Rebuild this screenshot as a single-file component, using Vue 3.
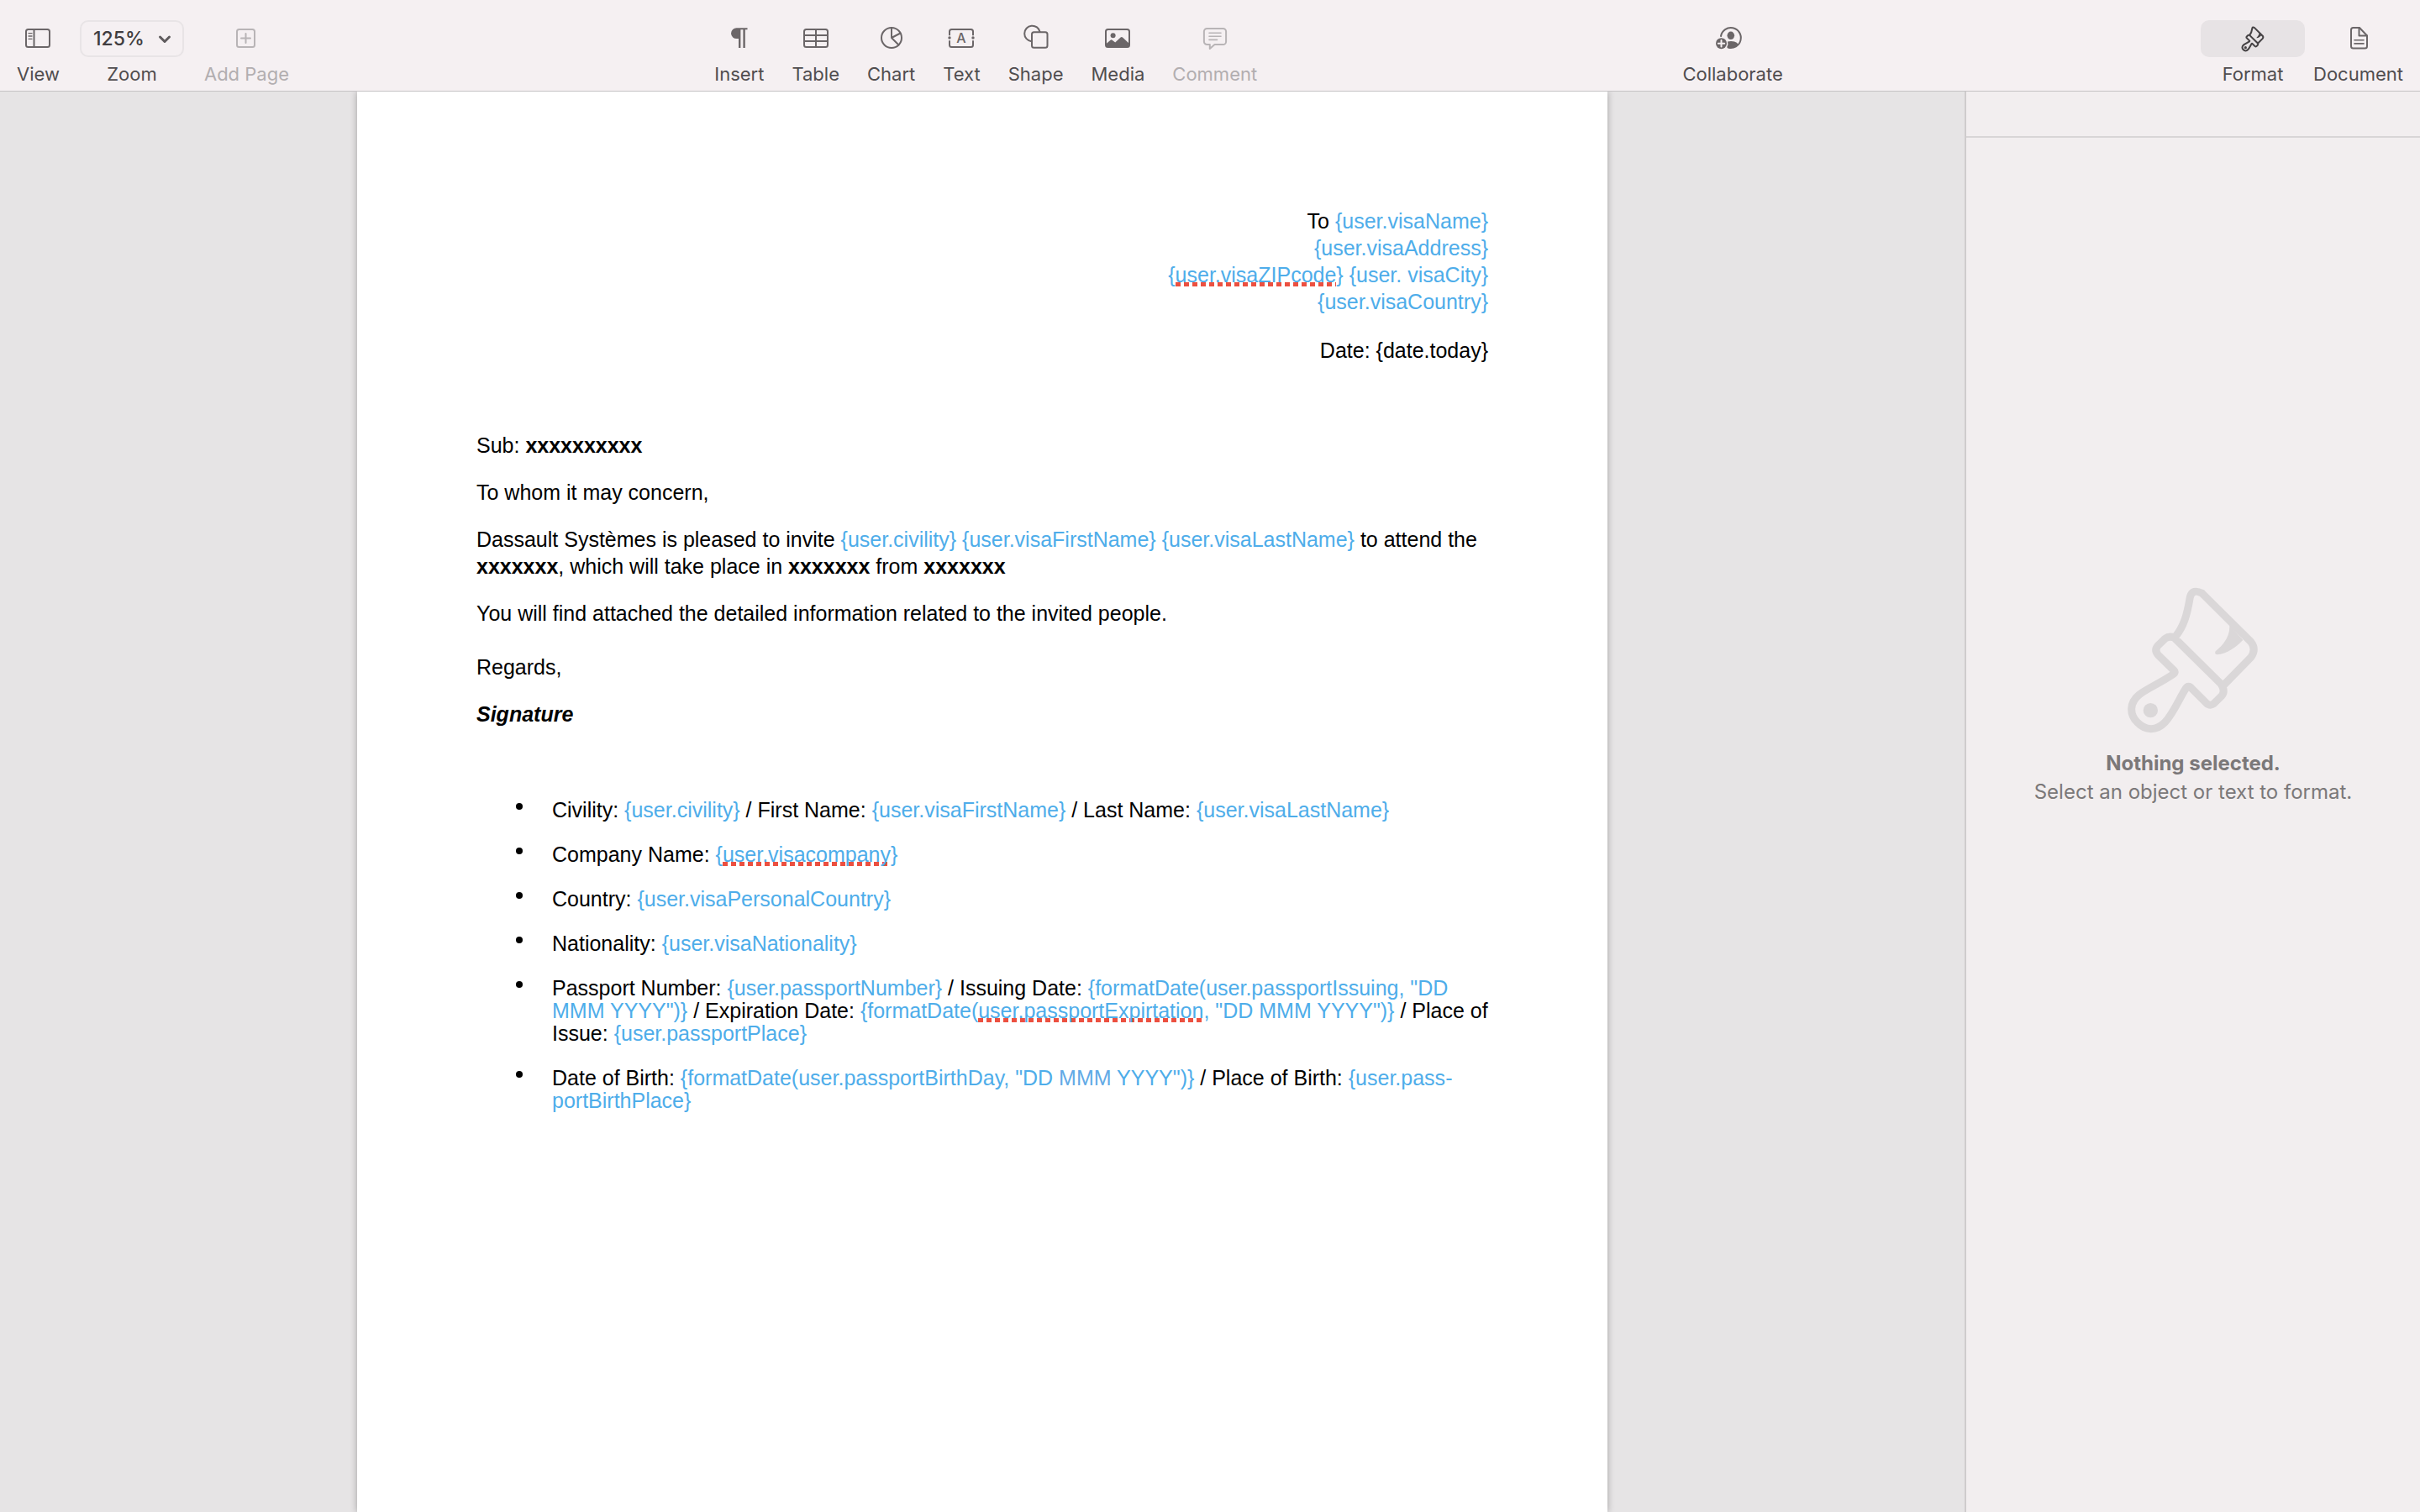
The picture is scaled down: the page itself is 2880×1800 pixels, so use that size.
<script setup>
import { ref } from 'vue';

// data
const zoom = ref('125%');
const zoomLevels = ['75%', '100%', '125%', '150%', '200%'];
const activePanel = ref('format');
</script>

<template>
  <div class="app">
    <header class="toolbar">
      <div class="group group-left">
        <button class="tool" type="button">
          <svg class="icon" viewBox="0 0 44 44">
            <rect x="8" y="11" width="28" height="21" rx="2.5" />
            <path d="M17.5 11v21" />
            <path d="M11 15.7h4M11 19h4M11 22.3h4" stroke-width="1.3" />
          </svg>
          <span>View</span>
        </button>
        <div class="tool">
          <div class="select-box">
            <select id="zoom" v-model="zoom">
              <option v-for="level in zoomLevels" :key="level">{{ level }}</option>
            </select>
            <svg class="chevron" viewBox="0 0 16 12">
              <path d="M2.5 3 8 8.5 13.5 3" />
            </svg>
          </div>
          <label for="zoom">Zoom</label>
        </div>
        <button class="tool" type="button" disabled>
          <svg class="icon" viewBox="0 0 44 44">
            <rect x="11" y="11" width="21" height="21" rx="2.5" />
            <path d="M21.5 16v11M16 21.5h11" />
          </svg>
          <span>Add Page</span>
        </button>
      </div>

      <div class="group group-insert">
        <button class="tool" type="button">
          <svg class="icon" viewBox="0 0 44 44">
            <path
              class="solid"
              d="M31.5 9.3H19a6.6 6.6 0 0 0-7 6.4 6.6 6.6 0 0 0 7 6.4h2V33h2.4V11.3h3V33h2.4V11.3h2.7z"
            />
          </svg>
          <span>Insert</span>
        </button>
        <button class="tool" type="button">
          <svg class="icon" viewBox="0 0 44 44">
            <rect x="8" y="11" width="28" height="21" rx="2.5" />
            <path d="M22 11v21M8 18h28M8 25h28" />
          </svg>
          <span>Table</span>
        </button>
        <button class="tool" type="button">
          <svg class="icon" viewBox="0 0 44 44">
            <circle cx="22" cy="21" r="12" />
            <path d="M22 9v12l10.5-5.5M22 21l8.5 8.5" />
          </svg>
          <span>Chart</span>
        </button>
        <button class="tool" type="button">
          <svg class="icon" viewBox="0 0 44 44">
            <path d="M8 17.5v-4A2.5 2.5 0 0 1 10.5 11h23a2.5 2.5 0 0 1 2.5 2.5v4" />
            <path d="M8 25v4.5a2.5 2.5 0 0 0 2.5 2.5h23a2.5 2.5 0 0 0 2.5-2.5V25" />
            <circle class="solid" cx="8" cy="21" r="1.7" />
            <circle class="solid" cx="36" cy="21" r="1.7" />
            <text class="glyph" x="22" y="27" text-anchor="middle">A</text>
          </svg>
          <span>Text</span>
        </button>
        <button class="tool" type="button">
          <svg class="icon" viewBox="0 0 44 44">
            <path d="M16.5 25.2A9.3 9.3 0 1 1 26.6 14" />
            <rect x="17" y="14.2" width="18.5" height="18.5" rx="2.5" />
          </svg>
          <span>Shape</span>
        </button>
        <button class="tool" type="button">
          <svg class="icon" viewBox="0 0 44 44">
            <rect x="8" y="11" width="28" height="21" rx="2.5" />
            <circle class="solid" cx="16.6" cy="18.3" r="3" />
            <path
              class="solid"
              d="M8 28.5l5.6-4.8q1-.7 2 0l3.6 2.8 6.4-6q1.2-1 2.4 0l8 7.5v2q0 2-2.5 2h-23q-2.5 0-2.5-2z"
            />
          </svg>
          <span>Media</span>
        </button>
        <button class="tool" type="button" disabled>
          <svg class="icon" viewBox="0 0 44 44">
            <path
              d="M12.5 10h19a3.6 3.6 0 0 1 3.6 3.6v11.8a3.6 3.6 0 0 1-3.6 3.6H21.5l-5.7 5V29h-3.3a3.6 3.6 0 0 1-3.6-3.6V13.6a3.6 3.6 0 0 1 3.6-3.6z"
            />
            <path d="M15 15.2h14M15 19.3h14M15 23.4h9.5" stroke-width="1.6" />
          </svg>
          <span>Comment</span>
        </button>
      </div>

      <div class="group">
        <button class="tool" type="button">
          <svg class="icon" viewBox="0 0 44 44">
            <path d="M8 19a12 12 0 1 1 8.6 13.6" />
            <ellipse class="solid" cx="19.8" cy="18.3" rx="4.3" ry="4.8" />
            <path class="solid" d="M16 25.6q4-1.2 8 0 3.4 1 4.6 3.2-4.4 4.7-9.4 4.2-3 0-4-.7 2-3.200.8-6.700z" />
            <circle class="solid" cx="8.5" cy="27.7" r="6.5" />
            <path class="badge-plus" d="M8.5 24v7.4M4.8 27.7h7.4" />
          </svg>
          <span>Collaborate</span>
        </button>
      </div>

      <div class="group group-right">
        <button
          class="tool"
          :class="{ active: activePanel === 'format' }"
          type="button"
          @click="activePanel = 'format'"
        >
          <span class="pill">
            <svg class="icon-brush" viewBox="445 75 490 545">
              <path
                d="M626 264C655 228 668 190 679 121Q688 90 722 108L896 281Q917 308 896 337L798 437M790 432L622 266Q604 259 590 270L565 294Q550 311 565 328L621 383Q629 390 619 397C570 430 530 446 500 468C462 497 462 540 490 568C520 600 560 600 590 568C620 535 640 485 663 449Q673 433 685 448L736 499Q752 514 767 499L792 474Q806 458 790 432Z"
              />
              <path
                class="solid"
                d="M820 222C822 262 798 292 770 315Q765 325 776 327C810 325 845 300 868 274Z"
              />
              <circle class="solid" cx="538" cy="526" r="28" />
            </svg>
          </span>
          <span>Format</span>
        </button>
        <button
          class="tool"
          :class="{ active: activePanel === 'document' }"
          type="button"
          @click="activePanel = 'document'"
        >
          <svg class="icon" viewBox="0 0 44 44">
            <path d="M16.5 9H24l9 9.5V31q0 2.5-2.5 2.5h-14Q14 33.500 14 31V11.5Q14 9 16.500 9z" />
            <path d="M23.5 9v9.5H33" />
            <path d="M18 23.7h11M18 27.9h11" stroke-width="1.6" />
          </svg>
          <span>Document</span>
        </button>
      </div>
    </header>

    <div class="workspace">
      <main class="canvas">
        <article class="page">
          <address class="recipient">
            To <span class="field">{user.visaName}</span><br />
            <span class="field">{user.visaAddress}</span><br />
            <span class="field">{<span class="typo">user.visaZIPcode</span>} {user. visaCity}</span><br />
            <span class="field">{user.visaCountry}</span>
          </address>
          <p class="date">Date: {date.today}</p>

          <p class="subject">Sub: <strong>xxxxxxxxxx</strong></p>
          <p>To whom it may concern,</p>
          <p>
            Dassault Systèmes is pleased to invite
            <span class="field">{user.civility} {user.visaFirstName} {user.visaLastName}</span>
            to attend the <strong>xxxxxxx</strong>, which will take place in <strong>xxxxxxx</strong> from
            <strong>xxxxxxx</strong>
          </p>
          <p>You will find attached the detailed information related to the invited people.</p>
          <p class="regards">Regards,</p>
          <p class="signature">Signature</p>

          <ul class="details">
            <li>
              Civility: <span class="field">{user.civility}</span> / First Name:
              <span class="field">{user.visaFirstName}</span> / Last Name:
              <span class="field">{user.visaLastName}</span>
            </li>
            <li>
              Company Name: <span class="field">{<span class="typo">user.visacompany</span>}</span>
            </li>
            <li>Country: <span class="field">{user.visaPersonalCountry}</span></li>
            <li>Nationality: <span class="field">{user.visaNationality}</span></li>
            <li>
              Passport Number: <span class="field">{user.passportNumber}</span> / Issuing Date:
              <span class="field">{formatDate(user.passportIssuing, "DD MMM YYYY")}</span> / Expiration Date:
              <span class="field"
                >{formatDate(<span class="typo">user.passportExpirtation</span>, "DD MMM YYYY")}</span
              >
              / Place of Issue: <span class="field">{user.passportPlace}</span>
            </li>
            <li>
              Date of Birth:
              <span class="field"
                >{formatDate(user.passportBirthDay, "DD <span class="month">MMM</span> YYYY")}</span
              >
              / Place of Birth: <span class="field">{user.pass&shy;portBirthPlace}</span>
            </li>
          </ul>
        </article>
      </main>

      <aside class="inspector">
        <div class="inspector-tabs"></div>
        <div class="empty">
          <svg class="empty-brush" viewBox="450 80 480 534">
            <path
              d="M626 264C655 228 668 190 679 121Q688 90 722 108L896 281Q917 308 896 337L798 437M790 432L622 266Q604 259 590 270L565 294Q550 311 565 328L621 383Q629 390 619 397C570 430 530 446 500 468C462 497 462 540 490 568C520 600 560 600 590 568C620 535 640 485 663 449Q673 433 685 448L736 499Q752 514 767 499L792 474Q806 458 790 432Z"
            />
            <path
              class="solid"
              d="M820 222C822 262 798 292 770 315Q765 325 776 327C810 325 845 300 868 274Z"
            />
            <circle class="solid" cx="538" cy="526" r="26" />
          </svg>
          <h2>Nothing selected.</h2>
          <p>Select an object or text to format.</p>
        </div>
      </aside>
    </div>
  </div>
</template>

<style>
* {
  box-sizing: border-box;
}
body {
  margin: 0;
}
</style>

<style scoped>
.app {
  display: flex;
  flex-direction: column;
  min-height: 100vh;
  font-family: Inter, sans-serif;
}

/* toolbar */
.toolbar {
  display: flex;
  justify-content: space-between;
  padding: 24px 20px 6px;
  background-color: #f5f0f2;
  border-bottom: 1px solid #c5c2c4;
}
.group {
  display: flex;
  gap: 33px;
}
.group-left {
  gap: 24px;
  margin-right: 9px;
}
.group-insert {
  margin-right: 9px;
}
.group-right {
  gap: 10px;
}
.tool {
  display: flex;
  flex-direction: column;
  align-items: center;
  gap: 6px;
  padding: 0;
  border: 0;
  background: none;
  color: #504d4f;
  font-family: inherit;
  font-size: 22px;
  line-height: 28px;
}
.tool:disabled {
  color: #b2aeb0;
}
.icon {
  width: 44px;
  height: 44px;
  fill: none;
  stroke: #6b6668;
  stroke-width: 2;
  stroke-linecap: round;
  stroke-linejoin: round;
}
.icon .solid {
  fill: #6b6668;
  stroke: none;
}
.icon .glyph {
  fill: #6b6668;
  stroke: none;
  font-size: 16px;
  font-weight: 500;
}
.icon .badge-plus {
  stroke: #f5f0f2;
}
.tool:disabled .icon {
  stroke: #b8b4b6;
}
.select-box {
  position: relative;
}
select {
  display: block;
  width: 124px;
  height: 44px;
  padding: 0 14px;
  border: 2px solid #e8e4e6;
  border-radius: 10px;
  background: none;
  appearance: none;
  color: #403d3f;
  font-family: inherit;
  font-size: 23px;
  font-weight: 500;
}
.chevron {
  position: absolute;
  top: 17px;
  right: 15px;
  width: 16px;
  height: 12px;
  fill: none;
  stroke: #5f5b5d;
  stroke-width: 3;
  stroke-linecap: round;
  stroke-linejoin: round;
  pointer-events: none;
}
.pill {
  display: flex;
  justify-content: center;
  align-items: center;
  width: 124px;
  height: 44px;
  border-radius: 10px;
}
.active .pill {
  background-color: #e7e3e5;
}
.icon-brush {
  width: 28px;
  height: 31px;
  fill: none;
  stroke: #454244;
  stroke-width: 36;
  stroke-linejoin: round;
}
.icon-brush .solid {
  fill: #454244;
  stroke: none;
}

/* document */
.workspace {
  display: flex;
  flex: 1;
}
.canvas {
  display: flex;
  flex: 1;
  justify-content: center;
  background-color: #e6e4e5;
}
.page {
  width: 1488px;
  padding: 138px 142px;
  background-color: #fff;
  box-shadow: 0 0 8px rgba(0, 0, 0, 0.3);
  clip-path: inset(0 -20px);
  color: #000;
  font-family: 'Liberation Sans', Arial, sans-serif;
  font-size: 25px;
  line-height: 32px;
}
.page p {
  margin: 24px 0 0;
}
.recipient {
  font-style: normal;
  text-align: right;
}
.page .date {
  margin-top: 26px;
  text-align: right;
}
.page .subject {
  margin-top: 81px;
}
.page .regards {
  margin-top: 32px;
}
.signature {
  font-style: italic;
  font-weight: bold;
}
.field {
  color: #4eadea;
}
.month {
  color: #62aae6;
}
.typo {
  background: repeating-linear-gradient(90deg, #ec5040 0 6px, transparent 6px 10px) 0 100% / 100% 5px no-repeat;
}
.details {
  display: flex;
  flex-direction: column;
  gap: 26px;
  margin: 85px 0 0;
  padding: 0 0 0 90px;
  list-style: none;
  line-height: 27px;
}
.details li {
  position: relative;
}
.details li::before {
  content: '';
  position: absolute;
  top: 5px;
  left: -43px;
  width: 8px;
  height: 8px;
  border-radius: 50%;
  background-color: #000;
}

/* inspector */
.inspector {
  width: 542px;
  border-left: 2px solid #cfcccd;
  background-color: #f2eeef;
}
.inspector-tabs {
  height: 55px;
  border-bottom: 2px solid #d8d5d6;
}
.empty {
  display: flex;
  flex-direction: column;
  align-items: center;
  padding-top: 533px;
  color: #7b7879;
  font-size: 24px;
  line-height: 34px;
  text-align: center;
}
.empty h2,
.empty p {
  margin: 0;
  font-size: inherit;
}
.empty h2 {
  margin-top: 17px;
}
.empty-brush {
  width: 160px;
  height: 178px;
  fill: none;
  stroke: #dad7d8;
  stroke-width: 27;
  stroke-linejoin: round;
}
.empty-brush .solid {
  fill: #dad7d8;
  stroke: none;
}
</style>
